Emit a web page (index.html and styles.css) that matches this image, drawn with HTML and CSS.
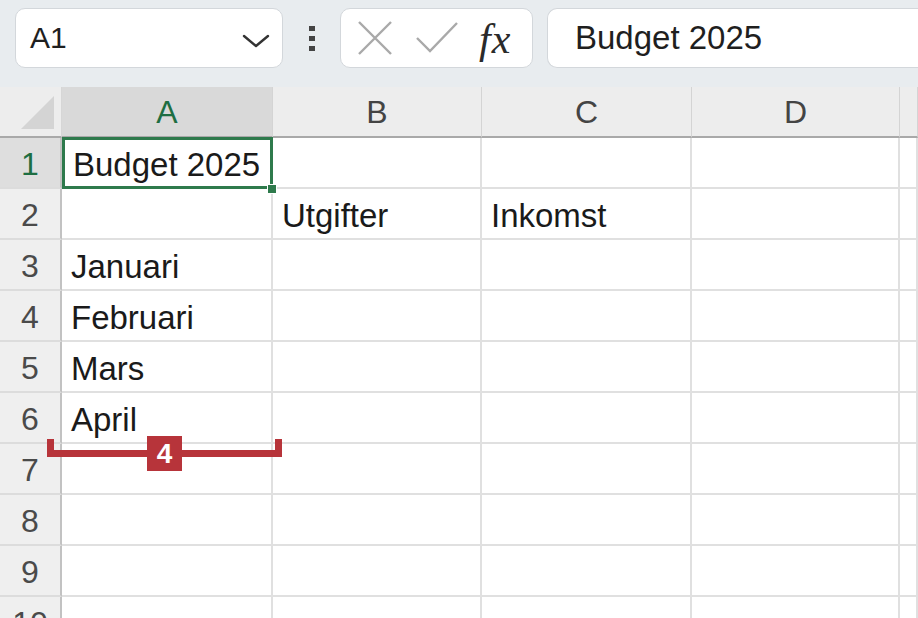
FILE: index.html
```html
<!DOCTYPE html>
<html lang="sv">
<head>
<meta charset="utf-8">
<title>Budget 2025</title>
<link rel="stylesheet" href="styles.css">
</head>
<body>
<div class="app">
  <div class="toolbar">
    <div class="namebox">
      <span class="nb-text">A1</span>
      <svg class="chev" width="28" height="14" viewBox="0 0 28 14"><polyline points="2,2 14,12 26,2" fill="none" stroke="#333" stroke-width="2.4" stroke-linecap="round" stroke-linejoin="round"/></svg>
    </div>
    <div class="dots"><i></i><i></i><i></i></div>
    <div class="fxbox">
      <svg class="ico" width="36" height="36" viewBox="0 0 36 36"><path d="M2 2 L34 34 M34 2 L2 34" stroke="#a9a9a9" stroke-width="2.4" fill="none"/></svg>
      <svg class="ico" width="44" height="34" viewBox="0 0 44 34"><polyline points="2,17 15,30 42,2" stroke="#a9a9a9" stroke-width="2.4" fill="none"/></svg>
      <span class="fx">fx</span>
    </div>
    <div class="formula">Budget 2025</div>
  </div>

  <div class="sheet">
    <div class="grid">
      <div class="corner"><span class="tri"></span></div>
      <div class="ch sel">A</div>
      <div class="ch">B</div>
      <div class="ch">C</div>
      <div class="ch">D</div>
      <div class="ch"></div>

      <div class="rh sel">1</div>
      <div class="c active">Budget 2025<span class="handle"></span></div>
      <div class="c"></div><div class="c"></div><div class="c"></div><div class="c"></div>

      <div class="rh">2</div>
      <div class="c"></div><div class="c">Utgifter</div><div class="c">Inkomst</div><div class="c"></div><div class="c"></div>

      <div class="rh">3</div>
      <div class="c">Januari</div><div class="c"></div><div class="c"></div><div class="c"></div><div class="c"></div>

      <div class="rh">4</div>
      <div class="c">Februari</div><div class="c"></div><div class="c"></div><div class="c"></div><div class="c"></div>

      <div class="rh">5</div>
      <div class="c">Mars</div><div class="c"></div><div class="c"></div><div class="c"></div><div class="c"></div>

      <div class="rh">6</div>
      <div class="c">April</div><div class="c"></div><div class="c"></div><div class="c"></div><div class="c"></div>

      <div class="rh">7</div>
      <div class="c"></div><div class="c"></div><div class="c"></div><div class="c"></div><div class="c"></div>

      <div class="rh">8</div>
      <div class="c"></div><div class="c"></div><div class="c"></div><div class="c"></div><div class="c"></div>

      <div class="rh">9</div>
      <div class="c"></div><div class="c"></div><div class="c"></div><div class="c"></div><div class="c"></div>

      <div class="rh">10</div>
      <div class="c"></div><div class="c"></div><div class="c"></div><div class="c"></div><div class="c"></div>
    </div>

    <div class="annot">
      <span class="bar"></span>
      <span class="badge">4</span>
    </div>
  </div>
</div>
</body>
</html>
```

FILE: styles.css
```css
* { box-sizing: border-box; }
html, body { margin: 0; padding: 0; }
body {
  width: 918px;
  height: 618px;
  overflow: hidden;
  background: #ffffff;
  font-family: "Liberation Sans", Arial, sans-serif;
  color: #222;
}
.app { width: 918px; height: 618px; overflow: hidden; }

.toolbar {
  height: 87px;
  background: #e8ecef;
  display: flex;
  align-items: flex-start;
  padding: 8px 0 0 15px;
  white-space: nowrap;
}
.namebox {
  width: 268px;
  height: 60px;
  background: #fff;
  border: 1px solid #d3d7db;
  border-radius: 10px;
  display: flex;
  align-items: center;
  justify-content: space-between;
  padding: 0 12px 0 14px;
  font-size: 30px;
  color: #1f1f1f;
}
.chev { margin-top: 6px; }
.dots {
  width: 57px;
  height: 60px;
  display: flex;
  flex-direction: column;
  align-items: center;
  justify-content: center;
  gap: 5px;
}
.dots i { width: 6px; height: 5px; background: #444; display: block; }
.fxbox {
  width: 193px;
  height: 60px;
  background: #fff;
  border: 1px solid #d3d7db;
  border-radius: 10px;
  display: flex;
  align-items: center;
  padding: 0 0 0 16px;
  gap: 22px;
}
.fx {
  font-family: "Liberation Serif", "Times New Roman", serif;
  font-style: italic;
  font-size: 42px;
  line-height: 1;
  color: #2a2a2a;
  margin-left: -2px;
  margin-top: 2px;
  letter-spacing: 1px;
}
.formula {
  flex: 1;
  margin-left: 14px;
  height: 60px;
  background: #fff;
  border: 1px solid #d3d7db;
  border-right: none;
  border-radius: 10px 0 0 10px;
  display: flex;
  align-items: center;
  padding-left: 27px;
  font-size: 33px;
  color: #1f1f1f;
}

.sheet { position: relative; }
.grid {
  display: grid;
  grid-template-columns: 62px 211px 209px 210px 208px 1fr;
  grid-template-rows: 51px repeat(10, 51px);
}
.corner {
  background: #ededed;
  border-right: 1px solid #d6d6d6;
  border-bottom: 2px solid #a9a9a9;
  position: relative;
}
.tri {
  position: absolute;
  right: 7px;
  bottom: 7px;
  width: 0; height: 0;
  border-style: solid;
  border-width: 0 0 33px 33px;
  border-color: transparent transparent #d4d4d4 transparent;
}
.ch {
  background: #ededed;
  border-right: 1px solid #d4d4d4;
  border-bottom: 2px solid #a9a9a9;
  display: flex;
  align-items: center;
  justify-content: center;
  font-size: 32px;
  color: #444;
  padding-top: 2px;
}
.ch.sel { background: #d9d9d9; color: #1e6e42; }
.rh {
  background: #efefef;
  border-right: 2px solid #c2c2c2;
  border-bottom: 2px solid #dcdcdc;
  display: flex;
  align-items: center;
  justify-content: center;
  font-size: 32px;
  color: #4a4a4a;
  padding-top: 4px;
}
.rh.sel { background: #dedede; color: #1e6e42; }
.c {
  border-right: 2px solid #e0e0e0;
  border-bottom: 2px solid #e0e0e0;
  display: flex;
  align-items: center;
  padding: 5px 0 0 9px;
  font-size: 33px;
  color: #1a1a1a;
  white-space: nowrap;
}
.active {
  position: relative;
  padding-left: 11px;
}
.active::after {
  content: "";
  position: absolute;
  left: 0; top: -1px; right: -2px; bottom: -2px;
  border: 3px solid #2e7a4c;
}
.handle {
  position: absolute;
  right: -6px;
  bottom: -7px;
  width: 10px;
  height: 10px;
  background: #2e7a4c;
  border: 1px solid #fff;
  z-index: 2;
}

.annot {
  position: absolute;
  left: 47px;
  top: 352px;
  width: 235px;
  height: 35px;
}
.bar {
  position: absolute;
  left: 0; right: 0;
  top: 0;
  height: 18px;
  border: 7px solid #b7343a;
  border-top: none;
}
.badge {
  position: absolute;
  left: 100px;
  top: -3px;
  width: 35px;
  height: 35px;
  background: #b7343a;
  color: #fff;
  font-weight: bold;
  font-size: 28px;
  display: flex;
  align-items: center;
  justify-content: center;
}
```
